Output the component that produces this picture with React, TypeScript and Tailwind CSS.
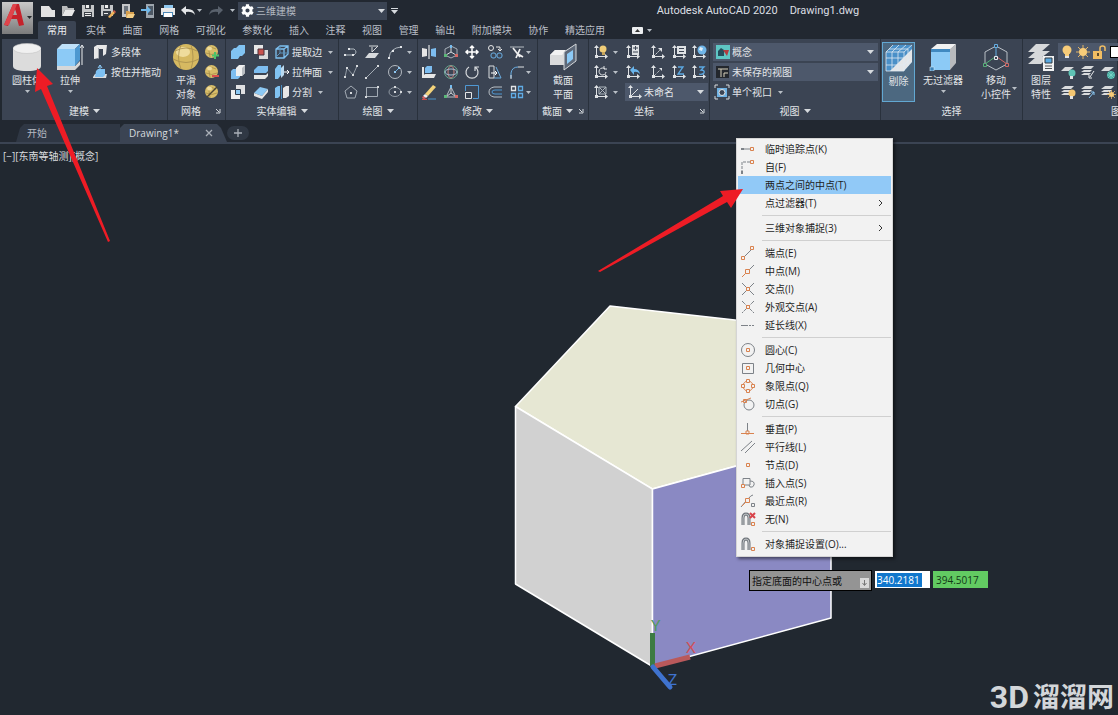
import type { ReactNode } from "react";
import { clsx } from "clsx";
import { FaCog } from "react-icons/fa";

function Icon({ children, big }: { children: ReactNode; big?: boolean }) {
  return (
    <svg
      viewBox={big ? "0 0 28 28" : "0 0 16 16"}
      className={clsx("shrink-0", big ? "h-7 w-7" : "h-4 w-4")}
      fill="none"
      aria-hidden="true"
    >
      {children}
    </svg>
  );
}

function Caret({ small }: { small?: boolean }) {
  return small ? (
    <svg viewBox="0 0 5 3" className="h-[3px] w-[5px] shrink-0" aria-hidden="true">
      <path d="M0 0h5L2.500 3z" fill="#b9bfc6" />
    </svg>
  ) : (
    <svg viewBox="0 0 7 4" className="h-1 w-[7px] shrink-0" aria-hidden="true">
      <path d="M0 0h7L3.500 4z" fill="#d6dade" />
    </svg>
  );
}

function Tool({ label, children }: { label: string; children: ReactNode }) {
  return (
    <button type="button" aria-label={label} className="flex h-5 items-center justify-center">
      {children}
    </button>
  );
}

function More() {
  return (
    <button type="button" aria-label="更多" className="flex h-5 items-center justify-center">
      <Caret small />
    </button>
  );
}

function BigTool({ icon, lines, caret, className }: { icon: ReactNode; lines: string[]; caret?: boolean; className?: string }) {
  return (
    <button type="button" className={clsx("flex shrink-0 flex-col items-center whitespace-nowrap pt-px leading-[14px]", className)}>
      {icon}
      <span className="mt-[2px]">{lines[0]}</span>
      {lines[1] && <span>{lines[1]}</span>}
      {caret && (
        <span className="mt-[3px]">
          <Caret small />
        </span>
      )}
    </button>
  );
}

function Panel({ title, width, caret, launcher, titleClass = "justify-center", children }: {
  title: string;
  width: string;
  caret?: boolean;
  launcher?: boolean;
  titleClass?: string;
  children: ReactNode;
}) {
  return (
    <section className={clsx("flex flex-col border-r border-[#29313c] bg-[#3b4453] pt-[3px]", width)}>
      <div className="flex h-[60px]">{children}</div>
      <div className={clsx("flex h-[18px] items-center gap-1 whitespace-nowrap", titleClass)}>
        <span>{title}</span>
        {caret && <Caret />}
        {launcher && (
          <button type="button" aria-label={title + "设置"} className="ml-auto mr-1">
            <svg viewBox="0 0 6 6" className="h-[6px] w-[6px]" fill="none">
              <path d="M1 1l3 3M5 1v4H1" stroke="#d6dade" />
            </svg>
          </button>
        )}
      </div>
    </section>
  );
}

function Select({ label, value, icon, className }: { label: string; value: string; icon: ReactNode; className: string }) {
  return (
    <label className={clsx("relative flex h-[18px] items-center gap-px bg-[#4d586b] pl-[2px]", className)}>
      {icon}
      <select aria-label={label} defaultValue={value} className="h-full min-w-0 grow appearance-none bg-transparent pr-3 outline-none">
        <option>{value}</option>
      </select>
      <span className="pointer-events-none absolute right-1">
        <Caret />
      </span>
    </label>
  );
}

/* quick access toolbar */
const quick = [
  { label: "新建", art: <path d="M1 3h8l3 4h3v7H1zM10 3l3 3" fill="#e2e2e2" /> },
  {
    label: "打开",
    art: (
      <>
        <path d="M2 13V3h5l1 2h6v2H5z" fill="#b9babb" />
        <path d="M5 7h10l-3 6H2z" fill="#e8e8e8" />
      </>
    ),
  },
  {
    label: "保存",
    art: (
      <>
        <path d="M2 2h12v12H2z" fill="#c5c7c9" />
        <path d="M5 2h6v4H5zM4 9h8v5H4z" fill="#3a3f46" />
        <path d="M6 2h3v3H6zM5 10h6v1H5zm0 2h6v1H5z" fill="#eee" />
      </>
    ),
  },
  {
    label: "另存为",
    art: (
      <>
        <path d="M1 2h12v11H1z" fill="#c5c7c9" />
        <path d="M4 2h6v4H4zM3 8h8v5H3z" fill="#3a3f46" />
        <path d="M5 2h3v3H5zM4 10h4v1H4z" fill="#eee" />
        <path d="M8 14l5-6 2 2-5 5z" fill="#efb35b" />
        <path d="M13 8l2 2 1-1-2-2z" fill="#d95b4a" />
      </>
    ),
  },
  {
    label: "从云打开",
    art: (
      <>
        <path d="M2 1h8v13H2z" fill="#c5c7c9" />
        <path d="M4 3h4v8H4z" fill="#6c737c" />
        <path d="M6 14V8h3l1 1h4v2z" fill="#d69f4e" />
        <path d="M8 11h7l-2 4H6z" fill="#f5cf86" />
      </>
    ),
  },
  {
    label: "保存到云",
    art: (
      <>
        <path d="M6 1h8v14H6z" fill="#9da5ad" />
        <path d="M8 3h5v9H8z" fill="#4d5865" />
        <path d="M1 6h6V3l4 4-4 4V8H1z" fill="#6fb8ea" />
      </>
    ),
  },
  {
    label: "打印",
    art: (
      <>
        <path d="M4 2h9v3H4z" fill="#8fc7ee" />
        <path d="M1 5h14v7H1z" fill="#e8e8e8" />
        <path d="M3 9h10v5H3z" fill="#4d88b5" />
        <path d="M4 10h8v4H4z" fill="#fff" />
      </>
    ),
  },
];

const ribbonTabs = ["实体", "曲面", "网格", "可视化", "参数化", "插入", "注释", "视图", "管理", "输出", "附加模块", "协作", "精选应用"];

function Sphere({ children }: { children?: ReactNode }) {
  return (
    <Icon>
      <circle cx="7.500" cy="7.500" r="6.500" fill="#d8bd68" />
      <path d="M3 5q5-3 9 0M2 9q6 3 11 0M6 2q-2 5 0 11" stroke="#9c8546" strokeWidth=".7" />
      <ellipse cx="5.500" cy="4.500" rx="2.500" ry="2" fill="#efdc9c" />
      {children}
    </Icon>
  );
}

function Axes({ children }: { children?: ReactNode }) {
  return (
    <Icon>
      <path d="M3.500 3v9.500H13" stroke="#dfe2e5" />
      <path d="M1 4l2.500-3L6 4zM12 10l3 2.500-3 2.500zM2 11h3v3H2z" fill="#dfe2e5" />
      {children}
    </Icon>
  );
}

function Layers({ children }: { children?: ReactNode }) {
  return (
    <Icon>
      <path d="M5 2h9l-3 3H1zM4 6h8l-2 2H1zM4 9h7l-2 2H1z" fill="#d9dbdd" />
      {children}
    </Icon>
  );
}

const solidTools = [
  { label: "并集", art: <path d="M1 7l3-3h2l3-3h6v8l-3 3h-2l-2 3H1z" fill="#81c3f2" /> },
  {
    label: "实体干涉",
    art: (
      <>
        <path d="M1 1h9v9H1z" fill="#e7e7e7" />
        <path d="M6 6h9v9H6z" fill="#dadada" />
        <path d="M5 5h6v6H5z" fill="#c8524d" stroke="#49333c" />
      </>
    ),
  },
  {
    label: "差集",
    art: (
      <>
        <path d="M1 7l2-2h7v8l-2 2H1z" fill="#7dbdf0" />
        <path d="M6 4l3-3h6v8l-3 3H6z" fill="#f0f0f0" />
        <path d="M12 4l3-3v8l-3 3z" fill="#b9bdc2" />
      </>
    ),
  },
  {
    label: "剖切",
    art: (
      <>
        <path d="M1 6l4-4h10v5l-2 2H1z" fill="#7dbdf0" />
        <path d="M1 11h12l2-2v3l-3 3H1z" fill="#e8e8e8" />
      </>
    ),
  },
  {
    label: "交集",
    art: (
      <>
        <path d="M6 1h9v9H6z" fill="#dfe0e2" />
        <path d="M1 6h9v9H1z" fill="#eee" />
        <path d="M5.500 5.500h5v5h-5z" fill="#8cc8f3" stroke="#303c4a" />
      </>
    ),
  },
  {
    label: "加厚",
    art: (
      <>
        <path d="M1 9l6-6 8 2-6 7z" fill="#8cc8f3" />
        <path d="M1 9l8 3v3l-8-3zM9 12l6-7v3l-6 7z" fill="#e6e6e6" />
      </>
    ),
  },
];

const edgeTools = [
  {
    label: "提取边",
    art: (
      <>
        <path d="M2 5l4-3h8v8l-4 4H2zM2 5h8v9M10 5l4-3" stroke="#7dc0f0" strokeWidth="1.300" />
        <path d="M6 2v7l-4 4M6 9h8" stroke="#5c92bb" />
      </>
    ),
  },
  {
    label: "拉伸面",
    art: (
      <>
        <path d="M1 5l3-4h3v10l-3 4H1z" fill="#81c3f2" />
        <path d="M7 4l3-3v10l-3 3z" fill="#b9d9ef" />
        <path d="M10 8h4M13 6l2 2-2 2" stroke="#fff" />
      </>
    ),
  },
  {
    label: "分割",
    art: (
      <>
        <path d="M1 4l3-2h2v10l-2 2H1z" fill="#81c3f2" />
        <path d="M7 1h1v14H7z" fill="#4a8ec2" />
        <path d="M9 4l3-2h3v10l-3 2H9z" fill="#e6e6e6" />
      </>
    ),
  },
];

const drawTools = [
  {
    label: "多段线",
    art: (
      <>
        <path d="M2 11h9q4-3 0-6H6" stroke="#aeb6be" />
        <path d="M1 10h2v2H1zM9 10h2v2H9zM5 4h2v2H5z" fill="#e3e6e9" />
      </>
    ),
  },
  {
    label: "平面曲面",
    art: (
      <>
        <path d="M1 14l4-5h10l-4 5z" fill="#d7dadd" />
        <path d="M5 2h9L8 8V3" stroke="#d7dadd" />
      </>
    ),
  },
  {
    label: "圆弧",
    art: (
      <>
        <path d="M2 14Q3 4 14 3" stroke="#aeb6be" />
        <path d="M1 13h2v2H1zM5 6h2v2H5zM13 2h2v2h-2z" fill="#e3e6e9" />
      </>
    ),
  },
  {
    label: "样条曲线",
    art: (
      <>
        <path d="M2 13L4 4l6 7 4-9" stroke="#929ba5" />
        <path d="M1 12h2v2H1zM3 3h2v2H3zM9 10h2v2H9zM13 1h2v2h-2z" fill="#d7dadd" />
      </>
    ),
  },
  {
    label: "直线",
    art: (
      <>
        <path d="M2 14L14 2" stroke="#a3abb4" />
        <path d="M1 13h2v2H1zM13 1h2v2h-2z" fill="#d7dadd" />
      </>
    ),
  },
  {
    label: "圆",
    art: (
      <>
        <circle cx="8" cy="8" r="6.500" stroke="#b4bac1" />
        <path d="M8 8l4-4" stroke="#69afe4" />
        <path d="M7 7h2v2H7zM11 3h2v2h-2z" fill="#8fc6f0" />
      </>
    ),
  },
  {
    label: "多边形",
    art: (
      <>
        <path d="M8 2l6 5-2 7H4L2 7z" stroke="#a3abb4" />
        <path d="M7 8h2v2H7z" fill="#d7dadd" />
      </>
    ),
  },
  {
    label: "矩形",
    art: (
      <>
        <path d="M2.500 3.500h11v9h-11z" stroke="#a3abb4" />
        <path d="M1 12h2v2H1zM13 2h2v2h-2z" fill="#d7dadd" />
      </>
    ),
  },
  {
    label: "椭圆",
    art: (
      <>
        <ellipse cx="8" cy="8" rx="6" ry="4.500" stroke="#8f98a2" />
        <path d="M7 7h2v2H7zM7 2h2v2H7zM13 7h2v2h-2z" fill="#d7dadd" />
      </>
    ),
  },
];

const modifyTools = [
  {
    label: "三维镜像",
    art: (
      <>
        <path d="M1 4l5 1v7l-5 1z" fill="#e6e6e6" />
        <path d="M8 1v14" stroke="#fff" />
        <path d="M10 5l5-1v9l-5-1z" fill="#7dbdf0" />
      </>
    ),
  },
  {
    label: "三维移动",
    art: (
      <>
        <path d="M8 2l6 3v6l-6 3-6-3V5z" stroke="#a8b1ba" />
        <path d="M8 3v5l-5 3M8 8l5 3" stroke="#d9dcdf" />
        <path d="M7 1h2v3H7z" fill="#76bdf0" />
        <path d="M1 10h3v3H1z" fill="#5bb878" />
        <path d="M12 10h3v3h-3z" fill="#d66b67" />
      </>
    ),
  },
  { label: "移动", art: <path d="M8 2v12M2 8h12M6 4l2-2 2 2M6 12l2 2 2-2M4 6L2 8l2 2M12 6l2 2-2 2" stroke="#fff" strokeWidth="1.500" /> },
  {
    label: "复制",
    art: (
      <>
        <circle cx="4" cy="4" r="2.500" stroke="#e8e8e8" />
        <path d="M9 3h4v4M11 5l2 2 2-2" stroke="#e8e8e8" />
        <rect x="4" y="9" width="5" height="5" rx="2" stroke="#6aaee3" />
        <rect x="10" y="9" width="5" height="5" rx="2" stroke="#6aaee3" />
      </>
    ),
  },
  {
    label: "修剪",
    art: (
      <>
        <path d="M1 3h14" stroke="#b4bac1" />
        <path d="M4 4l7 9M11 5L7 14M9 10l5 3" stroke="#f0f0f0" strokeWidth="1.700" />
      </>
    ),
  },
  {
    label: "三维对齐",
    art: (
      <>
        <path d="M1 3h2v10H1zM1 13l3-3h11l-2 4H1z" fill="#e6e6e6" />
        <path d="M4 4l2-2h5v6l-2 1H4z" fill="#7dbdf0" />
      </>
    ),
  },
  {
    label: "三维旋转",
    art: (
      <>
        <circle cx="8" cy="8" r="6.500" stroke="#6aa990" />
        <ellipse cx="8" cy="8" rx="3" ry="6" stroke="#c8837f" />
        <ellipse cx="8" cy="8" rx="6" ry="3" stroke="#a8c3d7" />
      </>
    ),
  },
  { label: "旋转", art: <path d="M5 3a6 6 0 1 0 6 0M11 7V3h4" stroke="#d9dcdf" strokeWidth="1.200" /> },
  {
    label: "拉伸",
    art: (
      <>
        <path d="M2 14V2h5v12z" stroke="#dadde0" />
        <path d="M9 3l5 11H7" stroke="#6aaee3" />
        <path d="M4 9h6M8 7l2 2-2 2" stroke="#fff" />
      </>
    ),
  },
  {
    label: "圆角",
    art: (
      <>
        <path d="M2 14V9Q3 3 9 3" stroke="#6aaee3" />
        <path d="M9 3h6M2 11v4" stroke="#dfe2e5" />
      </>
    ),
  },
  {
    label: "删除",
    art: (
      <>
        <path d="M4 10l8-9 3 2-8 9z" fill="#f3d37b" />
        <path d="M4 10l3 2-2 2-3-2z" fill="#f2f2f2" />
        <path d="M2 12l3 2-2 1-2-1z" fill="#de6161" />
        <path d="M1 15.500h5" stroke="#c94c48" />
        <path d="M7 15h8" stroke="#4d93c9" />
      </>
    ),
  },
  {
    label: "三维缩放",
    art: (
      <>
        <path d="M8 3l5 10H3z" stroke="#b6bcc3" />
        <path d="M8 3v6l-5 4M8 9l5 4" stroke="#cfd3d7" />
        <path d="M7 1h2v3H7z" fill="#76bdf0" />
        <path d="M1 11h3v3H1z" fill="#5bb878" />
        <path d="M12 11h3v3h-3z" fill="#d66b67" />
      </>
    ),
  },
  {
    label: "缩放",
    art: (
      <>
        <path d="M1.500 7V1.500h13v13H9" stroke="#4f98d3" />
        <path d="M1.500 8.500h6v6h-6z" stroke="#e3e5e7" />
      </>
    ),
  },
  {
    label: "偏移",
    art: (
      <>
        <path d="M15 3H7q-5 1-5 5t5 5h8" stroke="#b9c0c7" />
        <path d="M15 6H8q-3 0-3 2t3 2h7" stroke="#4f98d3" />
      </>
    ),
  },
  {
    label: "阵列",
    art: (
      <>
        <path d="M2.500 2.500h4v4h-4z" stroke="#e3e5e7" strokeWidth="1.300" />
        <path d="M9.500 2.500h4v4h-4zM2.500 9.500h4v4h-4zM9.500 9.500h4v4h-4z" stroke="#60ace5" strokeWidth="1.300" />
      </>
    ),
  },
];

const ucsTools = [
  [
    <Axes key="a"><circle cx="10" cy="5" r="3.500" fill="#f0cd78" /><path d="M9 8h3v3H9z" fill="#c7a55b" /></Axes>,
    <Axes key="b"><path d="M7 1h7v10H7z" fill="#dfe2e5" /><path d="M8 4h5M8 8h5M10.500 2v4" stroke="#3b4453" /></Axes>,
    <Axes key="c"><path d="M4 12l6-6" stroke="#dfe2e5" strokeDasharray="2 1" /><path d="M8 4h4v4z" fill="#dfe2e5" /></Axes>,
    <Axes key="d"><path d="M6 2h9v8H6z" fill="#dfe2e5" /><path d="M8 4.500h5M8 7.500h5" stroke="#3b4453" /></Axes>,
    <Axes key="e"><circle cx="11" cy="6" r="4.500" fill="#6fb5e8" /><path d="M9 3l3 1-1 3-3-1z" fill="#e0eef8" /></Axes>,
  ],
  [
    <Axes key="a"><path d="M12 5a3.500 3.500 0 1 0 1 3M11 2v3h3" stroke="#dfe2e5" /></Axes>,
    <Axes key="b"><path d="M5 6l4-4v3q5 0 6 5-3-3-6-2v3z" fill="#69b5ed" /></Axes>,
    <Axes key="c"><path d="M4 12l6-6" stroke="#dfe2e5" strokeDasharray="1 1" /><path d="M9 4h3v3z" fill="#dfe2e5" /></Axes>,
    <Axes key="d"><path d="M7 3h5l-5 7h6" stroke="#5ba8e2" strokeWidth="1.300" /></Axes>,
    <Axes key="e"><path d="M8 3h5l-3 3q4 0 3 3-2 2-5 1" stroke="#5ba8e2" strokeWidth="1.300" /></Axes>,
  ],
];

function Bulb({ fill = "#f7cc79" }: { fill?: string }) {
  return (
    <>
      <circle cx="8" cy="6" r="4.500" fill={fill} />
      <path d="M6 9h4v3H6z" fill={fill} />
      <path d="M6 12h4v2H6z" fill="#e4e4e4" />
    </>
  );
}

const sunRays = "M8 1v14M1 8h14M3 3l10 10M13 3L3 13";

/* object snap menu */
const gray = "#7d8288";
const orange = "#d9824f";

type Item = { text: string; art?: ReactNode; active?: boolean; sub?: boolean };

const magnet = (
  <>
    <path d="M3 14V7q0-4 3-4t3 4v7" stroke="#6f757b" strokeWidth="3" />
    <path d="M3 14V7q0-4 3-4t3 4v7" stroke="#c3c6c9" />
    <path d="M11.500 11.500h3v3h-3z" stroke={orange} />
  </>
);

const menu: Item[][] = [
  [
    { text: "临时追踪点(K)", art: (<><path d="M1 8h10" stroke={gray} /><path d="M1 7h3v2H1z" fill={gray} /><path d="M10.500 6.500h3v3h-3z" stroke={orange} /></>) },
    { text: "自(F)", art: (<><path d="M2 14V3h8" stroke={gray} strokeDasharray="3 1" /><path d="M1 12h2v3H1z" fill={gray} /><path d="M10.500 1.500h3v3h-3z" stroke={orange} /></>) },
    { text: "两点之间的中点(T)", active: true },
    { text: "点过滤器(T)", sub: true },
  ],
  [{ text: "三维对象捕捉(3)", sub: true }],
  [
    { text: "端点(E)", art: (<><path d="M4 12l8-8" stroke={gray} /><path d="M1.500 11.500h3v3h-3zM10.500 1.500h3v3h-3z" fill="#f2f2f2" stroke={orange} /></>) },
    { text: "中点(M)", art: (<><path d="M2 14L14 2" stroke={gray} /><path d="M2 14l4-4" stroke={orange} /><path d="M5.500 6.500h4v4h-4z" fill="#f2f2f2" stroke={orange} /></>) },
    { text: "交点(I)", art: (<><path d="M2 2l12 12M14 2L2 14" stroke={gray} /><path d="M6.500 6.500h3v3h-3z" fill="#f2f2f2" stroke={orange} /></>) },
    { text: "外观交点(A)", art: (<><path d="M2 2l12 12M14 2L2 14" stroke={gray} strokeDasharray="4 1" /><path d="M6.500 6.500h3v3h-3z" fill="#f2f2f2" stroke={orange} /></>) },
    { text: "延长线(X)", art: <path d="M1 8.500h7m1 0h2m1 0h2" stroke={gray} /> },
  ],
  [
    { text: "圆心(C)", art: (<><circle cx="8" cy="8" r="6.500" stroke={gray} /><path d="M6.500 6.500h3v3h-3z" stroke={orange} /></>) },
    { text: "几何中心", art: (<><path d="M2.500 3.500h11v10h-11z" stroke={gray} /><path d="M6.500 6.500h3v3h-3z" stroke={orange} /></>) },
    { text: "象限点(Q)", art: (<><circle cx="8" cy="8" r="5" stroke={orange} /><path d="M6.500 1.500h3v3h-3zM6.500 11.500h3v3h-3zM1.500 6.500h3v3h-3zM11.500 6.500h3v3h-3z" fill="#f2f2f2" stroke={orange} /></>) },
    { text: "切点(G)", art: (<><circle cx="9" cy="9" r="5" stroke={gray} /><path d="M1 6l10-4M3.500 3.500h3v3h-3z" stroke={orange} /></>) },
  ],
  [
    { text: "垂直(P)", art: (<><path d="M7.500 2v8" stroke={gray} /><path d="M1 12.500h13M6 10h3v3H6z" stroke={orange} /></>) },
    { text: "平行线(L)", art: <path d="M1 12L12 2M5 14L15 4" stroke={gray} /> },
    { text: "节点(D)", art: <path d="M6.500 6.500h3v3h-3z" stroke={orange} /> },
    { text: "插入点(S)", art: (<><path d="M3 9V3.500h7V10H5M10 6q5 0 4 4-1 3-4 2l-1-2" stroke={gray} /><path d="M1.500 9.500h3v3h-3z" fill="#f2f2f2" stroke={orange} /></>) },
    { text: "最近点(R)", art: (<><path d="M1 14l5-6M8 6q3-4 5-4" stroke={gray} /><path d="M5.500 5.500h4v4h-4zM2 13l4-4" stroke={orange} /><path d="M11.500 10.500h3v3h-3z" stroke={gray} /></>) },
    { text: "无(N)", art: (<>{magnet}<path d="M10 2l5 5M15 2l-5 5" stroke="#d8434b" strokeWidth="2" /></>) },
  ],
  [{ text: "对象捕捉设置(O)...", art: magnet }],
];

function SnapMenu() {
  return (
    <div role="menu" className="absolute left-[736px] top-[138px] flex w-[157px] flex-col border border-[#d5d5d5] bg-[#f2f2f2] px-px pb-[3px] pt-px text-[#1d1d1d] shadow-[2px_2px_3px_rgba(0,0,0,0.5)]">
      {menu.map((group, i) => (
        <div key={i}>
          {i > 0 && <div className="my-[3px] ml-6 h-px bg-[#d0d0d0]" />}
          {group.map((item) => (
            <button
              key={item.text}
              type="button"
              role="menuitem"
              className={clsx("flex h-[18px] w-full items-center gap-[9px] pl-[2px] pr-2 text-left", item.active && "bg-[#91c9f7]")}
            >
              <Icon>{item.art}</Icon>
              <span className="grow">{item.text}</span>
              {item.sub && (
                <svg viewBox="0 0 5 8" className="h-2 w-[5px]" fill="none">
                  <path d="M1 1l3 3-3 3" stroke="#333" />
                </svg>
              )}
            </button>
          ))}
        </div>
      ))}
    </div>
  );
}

function Header() {
  return (
    <header className="flex h-[39px] bg-[#222831]">
      <button type="button" aria-label="应用程序菜单" className="ml-[2px] mt-[2px] flex h-8 w-[31px] shrink-0 items-center bg-linear-to-b from-[#c9c9c9] to-[#7b7b7b]">
        <svg viewBox="0 0 31 32" className="h-8 w-[31px]">
          <path d="M2 23L11 2h6l5 21-5 1-2-7H9l-3 7z" fill="#c5222b" />
          <path d="M11 13l2-6 2 6z" fill="#a9a9a9" />
          <path d="M11 2h4L7 23l-5 0z" fill="#e0444b" />
          <path d="M25 14h5l-2.500 3z" fill="#26292d" />
        </svg>
      </button>
      <div className="flex grow flex-col">
        <div className="flex h-[21px] items-center">
          <div className="ml-[7px] flex gap-1">
            {quick.map((q) => (
              <button key={q.label} type="button" aria-label={q.label}>
                <Icon>{q.art}</Icon>
              </button>
            ))}
            <button type="button" aria-label="放弃">
              <Icon>
                <path d="M1 7l5-4v3q8-1 9 6-3-4-9-3v3z" fill="#e4e6e8" />
              </Icon>
            </button>
          </div>
          <div className="ml-px flex items-center gap-[6px]">
            <Caret small />
            <button type="button" aria-label="重做">
              <Icon>
                <path d="M15 7l-5-4v3Q2 5 1 12q3-4 9-3v3z" fill="#59616c" />
              </Icon>
            </button>
            <Caret small />
          </div>
          <label className="relative ml-[3px] flex h-[18px] w-[149px] shrink-0 items-center bg-[#3b4453] pl-[3px]">
            <FaCog className="h-[13px] w-[13px] text-white" />
            <select aria-label="工作空间" className="grow appearance-none bg-transparent pl-[2px] text-[#b2b8c0] outline-none">
              <option>三维建模</option>
            </select>
            <span className="pointer-events-none absolute right-[2px]">
              <Caret />
            </span>
          </label>
          <button type="button" aria-label="自定义" className="ml-1 flex flex-col items-center gap-px">
            <span className="h-px w-[7px] bg-[#d6dade]" />
            <Caret />
          </button>
          <h1 className="flex grow justify-center gap-3 whitespace-nowrap font-[Roboto,sans-serif] text-[11px] text-[#dcdfe3]">
            <span>Autodesk AutoCAD 2020</span>
            <span>Drawing1.dwg</span>
          </h1>
        </div>
        <nav className="flex h-[18px] items-center text-[#b9bec6]">
          <a href="#home" className="ml-[5px] flex h-full w-[38px] items-center justify-center rounded-t-xs bg-[#3b4453] text-[#eceef0]">
            常用
          </a>
          <div className="ml-[10px] flex w-[519px] justify-between">
            {ribbonTabs.map((t) => (
              <a key={t} href="#ribbon">
                {t}
              </a>
            ))}
          </div>
          <button type="button" aria-label="最小化功能区" className="ml-[27px] flex items-center gap-1">
            <svg viewBox="0 0 11 7" className="h-[7px] w-[11px]">
              <rect width="11" height="7" rx="1" fill="#eceef0" />
              <path d="M3 5l2.500-3L8 5z" fill="#333" />
            </svg>
            <Caret small />
          </button>
        </nav>
      </div>
    </header>
  );
}

function Ribbon() {
  return (
    <div className="flex h-[81px] shrink-0 overflow-hidden pl-[2px] text-[#e2e5e8]">
      <Panel title="建模" width="w-[166px] shrink-0" caret>
        <BigTool
          className="ml-1 w-[42px]"
          lines={["圆柱体"]}
          caret
          icon={
            <Icon big>
              <path d="M0 5v18q0 5 14 5t14-5V5z" fill="#dcdcdc" />
              <ellipse cx="14" cy="5.500" rx="14" ry="5" fill="#f0f0f0" stroke="#c4c4c4" strokeWidth=".6" />
            </Icon>
          }
        />
        <BigTool
          className="ml-px w-[42px]"
          lines={["拉伸"]}
          caret
          icon={
            <Icon big>
              <path d="M1 23h18l5-5v4l-5 5H1z" fill="#d5d7d9" />
              <path d="M1 6h18v17H1z" fill="#8ccaf6" />
              <path d="M1 6l5-5h18l-5 5z" fill="#bfe1f9" />
              <path d="M19 6l5-5v16l-5 6z" fill="#4d98d0" />
              <path d="M26 22V3M24 5l2-3 2 3" stroke="#eceef0" />
            </Icon>
          }
        />
        <div className="ml-px flex flex-col">
          <button type="button" className="flex h-5 items-center gap-[3px]">
            <Icon>
              <path d="M2 3l3-2h10l-1 9-3 2V5H7v9l-5 1z" fill="#e8e8e8" />
              <path d="M6 4h1v10l-1 1z" fill="#a9adb2" />
            </Icon>
            多段体
          </button>
          <button type="button" className="flex h-5 items-center gap-[3px]">
            <Icon>
              <path d="M1 13l2-3h12l-1 4H1z" fill="#dbdddf" />
              <path d="M4 7l2-2h7v6l-2 2H3z" fill="#7dc0f2" />
              <path d="M8 1v6M6 4l2-3 2 3" stroke="#8ccaf6" />
            </Icon>
            按住并拖动
          </button>
        </div>
      </Panel>
      <Panel title="网格" width="w-[58px] shrink-0" launcher titleClass="pl-[13px]">
        <BigTool
          className="ml-1 w-7"
          lines={["平滑", "对象"]}
          icon={
            <Icon big>
              <circle cx="14" cy="14" r="13" fill="#d6b961" />
              <ellipse cx="11" cy="9" rx="7" ry="5" fill="#efdc9c" />
              <path d="M3 8q11-6 22 0M1 16q13 7 26 0M9 2q-5 12 0 24M19 2q4 12 0 24" stroke="#a68d4c" strokeWidth=".8" />
            </Icon>
          }
        />
        <div className="ml-1 flex flex-col">
          <Tool label="提高平滑度">
            <Sphere>
              <path d="M11 8v7M8 11.500h7" stroke="#4cc46a" strokeWidth="2" />
            </Sphere>
          </Tool>
          <Tool label="降低平滑度">
            <Sphere>
              <path d="M8 12h7" stroke="#d8504d" strokeWidth="2" />
            </Sphere>
          </Tool>
          <Tool label="优化网格">
            <Sphere>
              <path d="M3 13L13 3" stroke="#4a4435" strokeWidth="1.500" />
            </Sphere>
          </Tool>
        </div>
      </Panel>
      <Panel title="实体编辑" width="w-[113px] shrink-0" caret>
        <div className="grid grid-cols-[23px_23px] justify-items-center">
          {solidTools.map((t) => (
            <Tool key={t.label} label={t.label}>
              <Icon>{t.art}</Icon>
            </Tool>
          ))}
        </div>
        <div className="ml-[2px] flex flex-col items-start">
          {edgeTools.map((t) => (
            <button key={t.label} type="button" className="flex h-5 items-center gap-[2px]">
              <Icon>{t.art}</Icon>
              {t.label}
              <span className="ml-1">
                <Caret small />
              </span>
            </button>
          ))}
        </div>
      </Panel>
      <Panel title="绘图" width="w-[79px] shrink-0" caret>
        <div className="ml-[2px] grid grid-cols-[20px_22px_24px]">
          {drawTools.map((t) => (
            <Tool key={t.label} label={t.label}>
              <Icon>{t.art}</Icon>
            </Tool>
          ))}
        </div>
        <div className="flex flex-col">
          <More />
          <More />
          <More />
        </div>
      </Panel>
      <Panel title="修改" width="w-[120px] shrink-0" caret>
        <div className="grid grid-cols-[22px_22px_20px_26px_18px]">
          {modifyTools.map((t) => (
            <Tool key={t.label} label={t.label}>
              <Icon>{t.art}</Icon>
            </Tool>
          ))}
        </div>
        <div className="flex flex-col">
          <More />
          <More />
          <More />
        </div>
      </Panel>
      <Panel title="截面" width="w-[51px] shrink-0" caret launcher titleClass="pl-1">
        <BigTool
          className="w-full"
          lines={["截面", "平面"]}
          icon={
            <Icon big>
              <path d="M1 12l5-5h10v15H1z" fill="#d9dadb" />
              <path d="M1 12l5-5h11l-4 5z" fill="#f2f2f2" />
              <path d="M15 9L27 1v17L15 27z" fill="#5d6878" stroke="#d5d8db" />
              <path d="M18 11l6-4v9l-6 5z" fill="#8ccaf6" />
            </Icon>
          }
        />
      </Panel>
      <Panel title="坐标" width="w-[121px] shrink-0" launcher titleClass="pl-[45px]">
        <div className="flex flex-col">
          {ucsTools.map((row, i) => (
            <div key={i} className="grid grid-cols-[24px_4px_32px_18px_24px_16px]">
              <Tool label="UCS">{row[0]}</Tool>
              <More />
              {row.slice(1).map((art, j) => (
                <Tool key={j} label={"UCS " + (j + 1)}>
                  {art}
                </Tool>
              ))}
            </div>
          ))}
          <div className="flex h-5 items-center">
            <div className="grid grid-cols-[24px_4px]">
              <Tool label="UCS 视图">
                <Axes>
                  <path d="M6 3h7v7H6zM6 3l7 7M13 3l-7 7" stroke="#aeb6be" />
                </Axes>
              </Tool>
              <More />
            </div>
            <Select
              label="UCS"
              value="未命名"
              className="ml-2 w-[83px]"
              icon={
                <Axes>
                  <path d="M4 12l7-7" stroke="#dfe2e5" />
                </Axes>
              }
            />
          </div>
        </div>
      </Panel>
      <Panel title="视图" width="w-[171px] shrink-0" caret>
        <div className="flex grow flex-col pl-[3px] pr-[2px]">
          <div className="flex h-5 items-center">
            <Select
              label="视觉样式"
              value="概念"
              className="grow"
              icon={
                <Icon>
                  <path d="M1 1h14v14H1z" fill="#5ec6c4" />
                  <path d="M3 7l3-3 3 2v6H3z" fill="#244e5c" />
                  <path d="M8 6h6l-2 6z" fill="#b13b3f" />
                </Icon>
              }
            />
          </div>
          <div className="flex h-5 items-center">
            <Select
              label="视图"
              value="未保存的视图"
              className="grow"
              icon={
                <Icon>
                  <path d="M1 2h13v12H1z" fill="#23272d" />
                  <path d="M3 5h10M6 5v8M9 13V9h4" stroke="#d8d2bd" />
                </Icon>
              }
            />
          </div>
          <button type="button" className="flex h-5 items-center gap-[2px] pl-px">
            <Icon>
              <path d="M1 4V1h3M12 1h3v3M15 12v3h-3M4 15H1v-3" stroke="#d8dadd" />
              <rect x="3" y="4" width="10" height="9" fill="#6eb2e4" />
              <circle cx="8" cy="8.500" r="3" fill="#3b4453" stroke="#e3e5e7" />
            </Icon>
            单个视口
            <span className="ml-1">
              <Caret small />
            </span>
          </button>
        </div>
      </Panel>
      <Panel title="选择" width="w-[142px] shrink-0">
        <BigTool
          className="ml-px w-[33px] border border-[#62a8d2] bg-[#4c6880]"
          lines={["剔除"]}
          icon={
            <Icon big>
              <path d="M1 8l7-7h19v17l-8 9H1z" fill="#4a90c8" />
              <path d="M27 5v13l-8 9H5z" fill="#e4e6e8" />
              <path d="M1 8h18v19H1zM8 1L1 8M14 1L7 8v19M21 1l-8 7v19M27 1l-8 7M1 14h18l8-8M1 21h18l8-8M4 5h19v17" stroke="#dfeaf2" strokeWidth=".8" />
            </Icon>
          }
        />
        <BigTool
          className="ml-[6px] w-[44px]"
          lines={["无过滤器"]}
          caret
          icon={
            <Icon big>
              <path d="M2 6l6-5h19l-6 6z" fill="#f1f1f1" />
              <path d="M21 6l6-5v19l-6 7z" fill="#b8babd" />
              <path d="M2 6h19v21H2z" fill="#8ccaf6" />
              <path d="M2 6h19v3H2z" fill="#4089c1" />
              <path d="M1 24h4v4H1z" fill="#3c84ba" stroke="#cfe6f6" strokeWidth=".6" />
            </Icon>
          }
        />
        <BigTool
          className="ml-[11px] w-[40px]"
          lines={["移动", "小控件"]}
          icon={
            <Icon big>
              <path d="M14 3l11 6v12l-11 6-11-6V9z" stroke="#b9bfc6" />
              <path d="M14 14V4" stroke="#65aee2" />
              <path d="M13 14L3 21" stroke="#57ae78" />
              <path d="M15 14l10 7" stroke="#d26966" />
              <path d="M12.500 1.500h3v3h-3z" stroke="#65aee2" fill="#3b4453" />
              <path d="M1.500 20.500h3v3h-3z" stroke="#57ae78" fill="#3b4453" />
              <path d="M23.500 20.500h3v3h-3z" stroke="#d26966" fill="#3b4453" />
              <path d="M12.500 13.500h3v3h-3z" stroke="#e8eaec" fill="#3b4453" />
            </Icon>
          }
        />
        <span className="mt-[45px] -ml-1">
          <Caret small />
        </span>
      </Panel>
      <Panel title="图层" width="min-w-0 flex-1" titleClass="pl-[88px]">
        <BigTool
          className="ml-1 w-7"
          lines={["图层", "特性"]}
          icon={
            <Icon big>
              <path d="M9 1h14l-9 8H1zM9 8h14l-9 7H1zM9 14h12l-7 7H1z" fill="#d6d8da" />
              <path d="M16 13h11v15H16z" fill="#f0f1f2" />
              <path d="M18 15h7v5h-7z" fill="#5aaae2" stroke="#31393f" />
              <path d="M18 23h7M18 25.500h7" stroke="#4c5156" />
            </Icon>
          }
        />
        <div className="ml-[3px] flex shrink-0 flex-col">
          <div className="my-px flex h-[18px] items-center bg-[#4d586b] pl-px">
            <Icon>
              <Bulb />
            </Icon>
            <Icon>
              <path d={sunRays} stroke="#e4b566" />
              <circle cx="8" cy="8" r="4" fill="#f7cc79" />
            </Icon>
            <Icon>
              <path d="M2 7h9v8H2z" fill="#f1bd63" />
              <path d="M9 7V4q0-2 2.500-2T14 4v3" stroke="#f1bd63" strokeWidth="1.500" />
              <path d="M6 9h2v3H6z" fill="#5d4a2c" />
            </Icon>
            <span className="ml-[3px] h-3 w-4 border border-black bg-white" />
          </div>
          <div className="grid grid-cols-[20px_20px_20px]">
            <Tool label="关闭图层">
              <Icon>
                <path d="M5 3h9l-5 4H1z" fill="#d9dbdd" />
                <circle cx="12" cy="9" r="3.500" fill="#5fc3b5" />
                <path d="M10 12h3v3h-3z" fill="#e4e4e4" />
              </Icon>
            </Tool>
            <Tool label="匹配图层">
              <Layers>
                <path d="M14 7l-4 6M9 11v3h3" stroke="#e8eaec" />
              </Layers>
            </Tool>
            <Tool label="冻结图层">
              <Icon>
                <path d="M5 3h9l-5 4H1z" fill="#d9dbdd" />
                <circle cx="11" cy="11" r="4" fill="#46a99f" />
                <path d="M11 7v8M7 11h8M8 8l6 6M14 8l-6 6" stroke="#84d8cc" strokeWidth=".7" />
              </Icon>
            </Tool>
            <Tool label="打开所有图层">
              <Layers>
                <circle cx="12" cy="9" r="3.500" fill="#f3c672" />
                <path d="M10 12h3v3h-3z" fill="#e4e4e4" />
              </Layers>
            </Tool>
            <Tool label="更改图层">
              <Layers>
                <path d="M9 14l5-6M11 8h3v3" stroke="#8ccaf6" />
              </Layers>
            </Tool>
            <Tool label="解冻图层">
              <Layers>
                <path d="M11.500 6v9M7 10.500h9M8 7l7 7M15 7l-7 7" stroke="#e4b566" strokeWidth=".8" />
                <circle cx="11.500" cy="10.500" r="2.500" fill="#f7cc79" />
              </Layers>
            </Tool>
          </div>
        </div>
      </Panel>
    </div>
  );
}

export default function App() {
  return (
    <div
      lang="zh-CN"
      className="relative flex min-h-screen flex-col overflow-hidden bg-[#212830] font-['Open_Sans','Noto_Sans_CJK_SC',sans-serif] text-[10px] leading-[14px]"
    >
      <Header />
      <Ribbon />
      <nav className="flex h-6 items-end border-b-2 border-[#3b4453] bg-[#222831] text-[#d5d9dd]">
        <a href="#start" className="ml-4 flex h-[18px] w-[104px] items-center bg-[#2f3744] pl-[11px] text-[#b5bac2] [clip-path:polygon(0_100%,4px_4px,8px_0,100%_0,100%_100%)]">
          开始
        </a>
        <div className="flex h-[18px] w-[107px] items-center justify-between bg-[#3b4453] pl-[9px] pr-[14px] [clip-path:polygon(0_4px,4px_0,97px_0,101px_4px,100%_100%,0_100%)]">
          <a href="#drawing1">Drawing1*</a>
          <button type="button" aria-label="关闭">
            <svg viewBox="0 0 8 8" className="h-2 w-2">
              <path d="M1 1l6 6M7 1L1 7" stroke="#aab0b8" strokeWidth="1.300" />
            </svg>
          </button>
        </div>
        <button type="button" aria-label="新图形" className="mb-[2px] flex h-[14px] w-[22px] items-center justify-center rounded-full bg-[#303844]">
          <svg viewBox="0 0 8 8" className="h-2 w-2">
            <path d="M4 0v8M0 4h8" stroke="#aab0b8" strokeWidth="1.300" />
          </svg>
        </button>
      </nav>

      <main className="relative grow">
        <p className="py-[5px] pl-[3px] text-[#d9dcdf]">[−][东南等轴测][概念]</p>
        <svg className="absolute inset-0 h-full w-full" aria-label="五棱柱">
          <g stroke="#fff" strokeWidth="1.500" strokeLinejoin="round">
            <path d="M515.500 262.500L610 162l196 22 25 112-179 49z" fill="#e6e7d3" />
            <path d="M515.500 262.500L652.500 345v177.500L515.500 440z" fill="#d1d1d1" />
            <path d="M652.500 345L831 296v178l-178.500 48.500z" fill="#8a89c3" />
          </g>
          <path d="M652.500 522V489" stroke="#3d7b43" strokeWidth="5" />
          <path d="M655 522l35-9" stroke="#b9595b" strokeWidth="5" />
          <path d="M653 523l17 20" stroke="#3f73cf" strokeWidth="5" strokeLinecap="round" />
          <g fontSize="15" fontFamily="Lato, sans-serif">
            <text x="651" y="487" fill="#4f9a5c">Y</text>
            <text x="686" y="509" fill="#cf5058">X</text>
            <text x="668" y="541" fill="#3f73cf">Z</text>
          </g>
        </svg>
      </main>

      <div className="absolute left-[749px] top-[570px] flex items-start gap-[3px]">
        <div className="flex h-[21px] w-[123px] items-center justify-between border border-black bg-[#949494] px-[2px] text-[#111]">
          指定底面的中心点或
          <svg viewBox="0 0 9 10" className="mt-1 h-[10px] w-[9px]">
            <path d="M0 0h9v10H0z" fill="#d9d9d9" />
            <path d="M4.500 2v5M2.500 5l2 2.500 2-2.500" stroke="#777" fill="none" />
          </svg>
        </div>
        <div className="mt-px flex h-[17px] w-[55px] items-center bg-white pl-[2px]">
          <input aria-label="X" defaultValue="340.2181" className="h-[14px] w-[45px] bg-[#1177cc] text-white outline-none" />
        </div>
        <input aria-label="Y" defaultValue="394.5017" className="mt-px h-[17px] w-[55px] bg-[#62cb62] pl-[3px] text-[#123a16] outline-none" />
      </div>

      <SnapMenu />

      <svg className="pointer-events-none absolute inset-0 h-full w-full" fill="#ee1c25" aria-hidden="true">
        <path d="M37 68l16 16-6 2 63 155-2 1L41 89l-6 3z" />
        <path d="M743 189l-12 19-4-6-127 70-2-1 125-75-3-5z" />
      </svg>

      <div className="absolute bottom-0 right-1 flex items-center gap-1 text-[27px] font-bold leading-9 text-[#d3d6d9]">
        <span className="font-[Roboto,sans-serif] text-[32px]">3D</span>
        <span>溜溜网</span>
      </div>
    </div>
  );
}
